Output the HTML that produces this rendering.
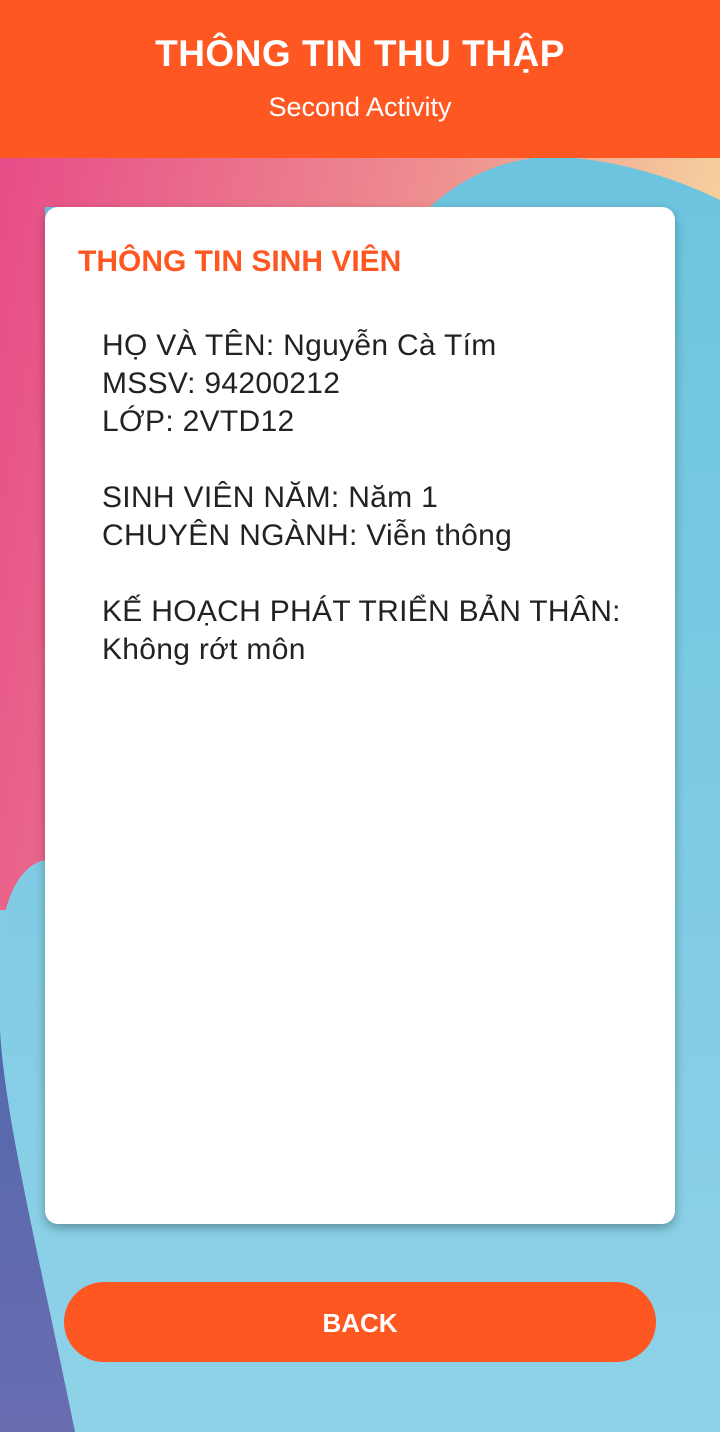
<!DOCTYPE html>
<html><head><meta charset="utf-8"><style>
*{margin:0;padding:0;box-sizing:border-box}
body{width:720px;height:1432px;position:relative;overflow:hidden;font-family:"Liberation Sans",sans-serif;background:#7ecbe2}
svg.bg{position:absolute;left:0;top:0}
.hdr{position:absolute;left:0;top:0;width:720px;height:158px;background:#ff5722;color:#fff;text-align:center}
.hdr h1{position:absolute;top:33px;width:100%;font-size:37px;font-weight:bold;letter-spacing:0.5px}
.hdr p{position:absolute;top:92px;width:100%;font-size:27px}
.card{position:absolute;left:45px;top:207px;width:630px;height:1017px;background:#fff;border-radius:13px;box-shadow:0 4px 10px rgba(0,0,0,.3)}
.card h2{position:absolute;left:33px;top:38px;font-size:30px;font-weight:bold;color:#ff5722}
.txt{position:absolute;left:57px;top:120px;font-size:30px;line-height:38px;color:#222;letter-spacing:0.3px}
.btn{position:absolute;left:64px;top:1282px;width:592px;height:80px;border-radius:40px;background:#ff5722;color:#fff;font-size:26px;font-weight:bold;text-align:center;line-height:82px}
</style></head><body>
<svg class="bg" width="720" height="1432" viewBox="0 0 720 1432">
<defs>
<linearGradient id="pk" x1="0" y1="0" x2="1" y2="0.2"><stop offset="0" stop-color="#e74c88"/><stop offset="0.6" stop-color="#ee9090"/><stop offset="1" stop-color="#f6d49e"/></linearGradient>
<linearGradient id="bl" x1="0" y1="0" x2="0" y2="1"><stop offset="0" stop-color="#6cc4de"/><stop offset="1" stop-color="#8fd2e8"/></linearGradient>
<linearGradient id="pu" x1="0" y1="0" x2="0" y2="1"><stop offset="0" stop-color="#5468ad"/><stop offset="1" stop-color="#6a6cb0"/></linearGradient>
</defs>
<rect width="720" height="1432" fill="url(#bl)"/>
<rect x="0" y="150" width="720" height="760" fill="url(#pk)"/>
<path d="M430 207 C470 170 520 155 560 157 C620 160 680 180 720 200 L720 1432 L0 1432 L0 960 C0 900 20 865 45 860 L45 207 Z" fill="url(#bl)"/>
<path d="M0 1030 C5 1120 40 1260 75 1432 L0 1432 Z" fill="url(#pu)"/>
</svg>
<div class="hdr"><h1>THÔNG TIN THU THẬP</h1><p>Second Activity</p></div>
<div class="card"><h2>THÔNG TIN SINH VIÊN</h2>
<div class="txt">HỌ VÀ TÊN: Nguyễn Cà Tím<br>MSSV: 94200212<br>LỚP: 2VTD12<br><br>SINH VIÊN NĂM: Năm 1<br>CHUYÊN NGÀNH: Viễn thông<br><br>KẾ HOẠCH PHÁT TRIỂN BẢN THÂN:<br>Không rớt môn</div></div>
<div class="btn">BACK</div>
</body></html>
